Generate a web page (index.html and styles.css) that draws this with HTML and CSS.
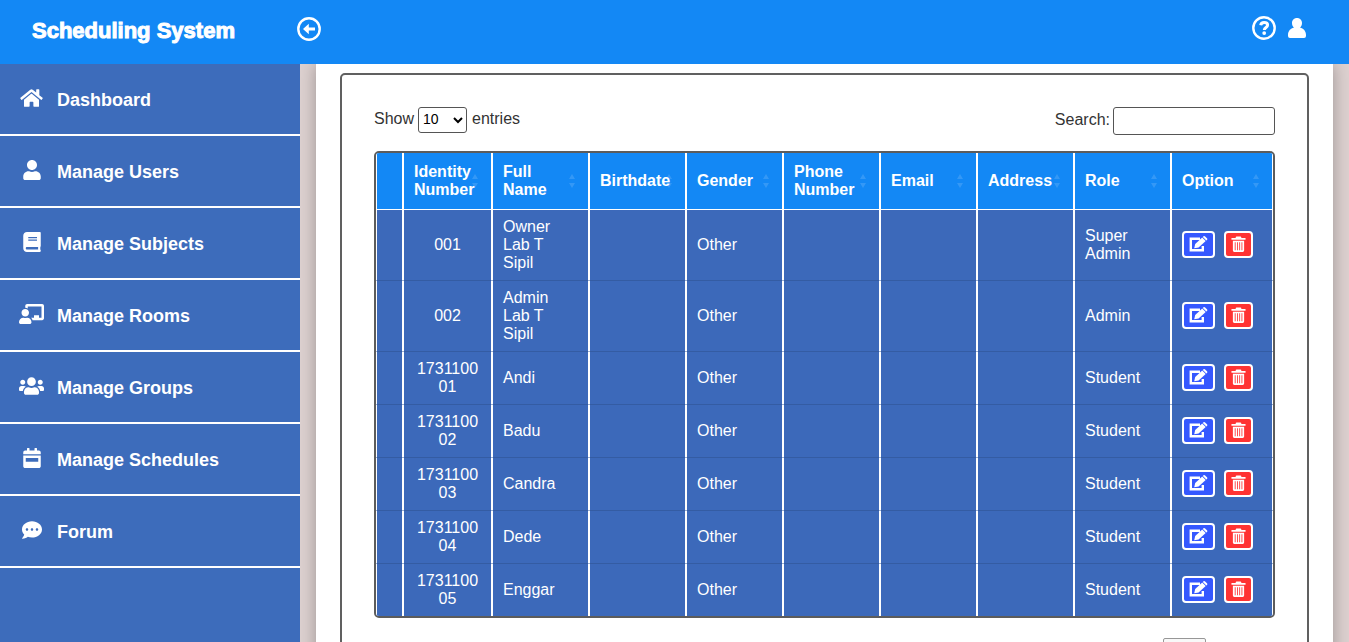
FILE: index.html
```html
<!DOCTYPE html>
<html lang="en">
<head>
<meta charset="utf-8">
<title>Scheduling System</title>
<link rel="stylesheet" href="styles.css">
</head>
<body>
<svg class="sprite" aria-hidden="true">
  <symbol id="edit" viewBox="0 0 19 16"><path d="M11 2.800H1.800v11.400h12V10" fill="none" stroke="currentColor" stroke-width="2.400"/><path d="M5.200 12.200l1-4.300 7-6.400 3.500 3.500-7.100 6.600z"/><path d="M13.800.9l.7-.6q.8-.6 1.600.1l1.900 1.900q.7.800 0 1.600l-.7.700z"/></symbol>
  <symbol id="trash" viewBox="0 0 16 18"><path fill-rule="evenodd" d="M5 1.500Q5 .5 6 .5h4q1 0 1 1V2h4.500v2H.5V2H5zM2 5h12v10.500q0 1.500-1.500 1.500h-9Q2 17 2 15.500zM4 6.500v8.500h.9V6.500zm2.400 0v8.500h.9V6.500zm2.400 0v8.500h.9V6.500zm2.400 0v8.500h.9V6.500z"/></symbol>
</svg>
<header class="topbar">
  <h1 class="brand">Scheduling System</h1>
  <button class="icon-button" type="button" aria-label="Collapse menu">
    <svg width="24" height="24" viewBox="0 0 24 24"><circle cx="12" cy="12" r="10.700" fill="none" stroke="currentColor" stroke-width="2.400"/><path d="M6 12l5.800-5.200v3.700H18v3h-6.200v3.700z"/></svg>
  </button>
  <div class="topbar-actions">
    <button class="icon-button" type="button" aria-label="Help">
      <svg width="24" height="24" viewBox="0 0 24 24"><circle cx="12" cy="12" r="10.700" fill="none" stroke="currentColor" stroke-width="2.400"/><path d="M8.700 9.200C9 7.200 10.300 6.400 12.100 6.400c2 0 3.500 1 3.500 2.700 0 2.500-3.300 2.300-3.300 5" fill="none" stroke="currentColor" stroke-width="3"/><circle cx="12.200" cy="17.100" r="1.900"/></svg>
    </button>
    <button class="icon-button" type="button" aria-label="Account">
      <svg width="18" height="20" viewBox="0 0 18 20"><path d="M9 0c3 0 5 2.200 5 5 0 2-.8 3.500-2 4.500 3.500.8 6 3.700 6 7.500v1q0 2-2 2H2q-2 0-2-2v-1c0-3.800 2.500-6.700 6-7.500C4.800 8.500 4 7 4 5c0-2.800 2-5 5-5z"/></svg>
    </button>
  </div>
</header>
<div class="layout">
  <nav class="sidebar">
    <a class="nav-link" href="#"><span class="nav-icon"><svg height="20" width="23" viewBox="0 0 576 512"><path d="M280.370 148.260L96 300.110V464a16 16 0 0 0 16 16l112.060-.29a16 16 0 0 0 15.920-16V368a16 16 0 0 1 16-16h64a16 16 0 0 1 16 16v95.640a16 16 0 0 0 16 16.050L464 480a16 16 0 0 0 16-16V300L295.670 148.260a12.190 12.190 0 0 0-15.300 0zM571.600 251.470L488 182.560V44.050a12 12 0 0 0-12-12h-56a12 12 0 0 0-12 12v72.610L318.470 43a48 48 0 0 0-61 0L4.340 251.470a12 12 0 0 0-1.600 16.900l25.500 31A12 12 0 0 0 45.150 301l235.220-193.740a12.190 12.190 0 0 1 15.300 0L530.900 301a12 12 0 0 0 16.900-1.600l25.500-31a12 12 0 0 0-1.700-16.930z"/></svg></span>Dashboard</a>
    <a class="nav-link" href="#"><span class="nav-icon"><svg height="20" width="18" viewBox="0 0 448 512"><path d="M224 256c70.700 0 128-57.300 128-128S294.700 0 224 0 96 57.300 96 128s57.300 128 128 128zm89.600 32h-16.700c-22.200 10.200-46.900 16-72.900 16s-50.600-5.800-72.900-16h-16.700C60.200 288 0 348.200 0 422.400V464c0 26.500 21.500 48 48 48h352c26.500 0 48-21.500 48-48v-41.600c0-74.200-60.200-134.400-134.400-134.400z"/></svg></span>Manage Users</a>
    <a class="nav-link" href="#"><span class="nav-icon"><svg height="20" width="18" viewBox="0 0 448 512"><path d="M448 360V24c0-13.300-10.700-24-24-24H96C43 0 0 43 0 96v320c0 53 43 96 96 96h328c13.300 0 24-10.700 24-24v-16c0-7.500-3.500-14.300-8.900-18.700-4.200-15.400-4.200-59.300 0-74.700 5.400-4.300 8.900-11.100 8.900-18.600zM128 134c0-3.300 2.700-6 6-6h212c3.300 0 6 2.700 6 6v20c0 3.300-2.700 6-6 6H134c-3.300 0-6-2.700-6-6v-20zm0 64c0-3.300 2.700-6 6-6h212c3.300 0 6 2.700 6 6v20c0 3.300-2.700 6-6 6H134c-3.300 0-6-2.700-6-6v-20zm253.400 250H96c-17.700 0-32-14.300-32-32 0-17.600 14.400-32 32-32h285.400c-1.900 17.100-1.900 46.900 0 64z"/></svg></span>Manage Subjects</a>
    <a class="nav-link" href="#"><span class="nav-icon"><svg height="20" width="25" viewBox="0 0 640 512"><path d="M208 352c-2.390 0-4.780.35-7.060 1.090C187.980 357.300 174.350 360 160 360c-14.350 0-27.980-2.700-40.950-6.910-2.280-.74-4.660-1.090-7.050-1.090C49.940 352-.33 402.480 0 464.620.14 490.880 21.730 512 48 512h224c26.270 0 47.860-21.120 48-47.380.33-62.140-49.940-112.620-112-112.620zm-48-32c53.020 0 96-42.980 96-96s-42.980-96-96-96-96 42.980-96 96 42.980 96 96 96zM592 0H208c-26.470 0-48 22.250-48 49.590V96c23.420 0 45.100 6.780 64 17.800V64h352v288h-64v-64H384v64h-76.240c19.100 16.690 33.120 38.730 39.690 64H592c26.470 0 48-22.250 48-49.590V49.590C640 22.250 618.470 0 592 0z"/></svg></span>Manage Rooms</a>
    <a class="nav-link" href="#"><span class="nav-icon"><svg height="20" width="25" viewBox="0 0 640 512"><path d="M96 224c35.300 0 64-28.700 64-64s-28.700-64-64-64-64 28.700-64 64 28.700 64 64 64zm448 0c35.300 0 64-28.700 64-64s-28.700-64-64-64-64 28.700-64 64 28.700 64 64 64zm32 32h-64c-17.600 0-33.500 7.100-45.100 18.600 40.300 22.100 68.900 62 75.100 109.400h66c17.700 0 32-14.300 32-32v-32c0-35.300-28.700-64-64-64zm-256 0c61.900 0 112-50.100 112-112S381.900 32 320 32 208 82.100 208 144s50.100 112 112 112zm76.800 32h-8.300c-20.800 10-43.900 16-68.500 16s-47.600-6-68.500-16h-8.300C179.600 288 128 339.600 128 403.200V432c0 26.500 21.500 48 48 48h288c26.500 0 48-21.500 48-48v-28.800c0-63.600-51.600-115.200-115.200-115.200zm-223.700-13.400C161.500 263.100 145.600 256 128 256H64c-35.300 0-64 28.700-64 64v32c0 17.700 14.300 32 32 32h65.900c6.300-47.400 34.900-87.300 75.200-109.400z"/></svg></span>Manage Groups</a>
    <a class="nav-link" href="#"><span class="nav-icon"><svg height="20" width="18" viewBox="0 0 448 512"><path fill-rule="evenodd" d="M0 160v-48c0-26.500 21.500-48 48-48h48V12c0-6.600 5.400-12 12-12h40c6.600 0 12 5.400 12 12v52h128V12c0-6.600 5.400-12 12-12h40c6.600 0 12 5.400 12 12v52h48c26.500 0 48 21.500 48 48v48zM0 192h448v272c0 26.500-21.500 48-48 48H48c-26.500 0-48-21.500-48-48zM64 256v96h320v-96z"/></svg></span>Manage Schedules</a>
    <a class="nav-link" href="#"><span class="nav-icon"><svg height="20" width="20" viewBox="0 0 512 512"><path d="M256 32C114.600 32 0 125.100 0 240c0 49.600 21.400 95 57 130.700C44.500 421.100 2.700 466 2.200 466.500c-2.200 2.300-2.800 5.700-1.500 8.700S4.800 480 8 480c66.300 0 116-31.800 140.600-51.400 32.700 12.300 69 19.400 107.400 19.400 141.400 0 256-93.100 256-208S397.400 32 256 32zM128 272c-17.700 0-32-14.300-32-32s14.300-32 32-32 32 14.300 32 32-14.300 32-32 32zm128 0c-17.700 0-32-14.300-32-32s14.300-32 32-32 32 14.300 32 32-14.300 32-32 32zm128 0c-17.700 0-32-14.300-32-32s14.300-32 32-32 32 14.300 32 32-14.300 32-32 32z"/></svg></span>Forum</a>
  </nav>
  <main class="content">
    <div class="page">
      <section class="panel">
        <div class="controls">
          <label class="length">Show
            <select class="length-select"><option>10</option><option>25</option><option>50</option></select>
            entries</label>
          <label class="search"><span class="search-label">Search:</span><input class="search-input" type="search"></label>
        </div>
        <div class="table-frame">
          <table class="users">
            <colgroup><col class="col-mark"><col class="col-id"><col><col><col><col><col><col><col><col class="col-option"></colgroup>
            <thead>
              <tr><th></th><th class="sort">Identity Number</th><th class="sort">Full Name</th><th class="sort">Birthdate</th><th class="sort">Gender</th><th class="sort">Phone Number</th><th class="sort">Email</th><th class="sort">Address</th><th class="sort">Role</th><th class="sort">Option</th></tr>
            </thead>
            <tbody>
              <tr><td></td><td class="id">001</td><td class="name">Owner Lab T Sipil</td><td></td><td>Other</td><td></td><td></td><td></td><td>Super Admin</td><td><div class="actions"><button class="action edit" type="button" aria-label="Edit"><svg width="19" height="16"><use href="#edit"/></svg></button><button class="action delete" type="button" aria-label="Delete"><svg width="15" height="17"><use href="#trash"/></svg></button></div></td></tr>
              <tr><td></td><td class="id">002</td><td class="name">Admin Lab T Sipil</td><td></td><td>Other</td><td></td><td></td><td></td><td>Admin</td><td><div class="actions"><button class="action edit" type="button" aria-label="Edit"><svg width="19" height="16"><use href="#edit"/></svg></button><button class="action delete" type="button" aria-label="Delete"><svg width="15" height="17"><use href="#trash"/></svg></button></div></td></tr>
              <tr><td></td><td class="id">173110001</td><td class="name">Andi</td><td></td><td>Other</td><td></td><td></td><td></td><td>Student</td><td><div class="actions"><button class="action edit" type="button" aria-label="Edit"><svg width="19" height="16"><use href="#edit"/></svg></button><button class="action delete" type="button" aria-label="Delete"><svg width="15" height="17"><use href="#trash"/></svg></button></div></td></tr>
              <tr><td></td><td class="id">173110002</td><td class="name">Badu</td><td></td><td>Other</td><td></td><td></td><td></td><td>Student</td><td><div class="actions"><button class="action edit" type="button" aria-label="Edit"><svg width="19" height="16"><use href="#edit"/></svg></button><button class="action delete" type="button" aria-label="Delete"><svg width="15" height="17"><use href="#trash"/></svg></button></div></td></tr>
              <tr><td></td><td class="id">173110003</td><td class="name">Candra</td><td></td><td>Other</td><td></td><td></td><td></td><td>Student</td><td><div class="actions"><button class="action edit" type="button" aria-label="Edit"><svg width="19" height="16"><use href="#edit"/></svg></button><button class="action delete" type="button" aria-label="Delete"><svg width="15" height="17"><use href="#trash"/></svg></button></div></td></tr>
              <tr><td></td><td class="id">173110004</td><td class="name">Dede</td><td></td><td>Other</td><td></td><td></td><td></td><td>Student</td><td><div class="actions"><button class="action edit" type="button" aria-label="Edit"><svg width="19" height="16"><use href="#edit"/></svg></button><button class="action delete" type="button" aria-label="Delete"><svg width="15" height="17"><use href="#trash"/></svg></button></div></td></tr>
              <tr><td></td><td class="id">173110005</td><td class="name">Enggar</td><td></td><td>Other</td><td></td><td></td><td></td><td>Student</td><td><div class="actions"><button class="action edit" type="button" aria-label="Edit"><svg width="19" height="16"><use href="#edit"/></svg></button><button class="action delete" type="button" aria-label="Delete"><svg width="15" height="17"><use href="#trash"/></svg></button></div></td></tr>
            </tbody>
          </table>
        </div>
        <div class="pager"><button class="page-button" type="button" aria-label="Page 1"></button></div>
      </section>
    </div>
  </main>
</div>
</body>
</html>
```
FILE: styles.css
```css
* { box-sizing: border-box; }
body {
  margin: 0;
  height: 100vh;
  display: flex;
  flex-direction: column;
  overflow: hidden;
  font: 16px/18px "Liberation Sans", Arial, sans-serif;
  color: #333;
}
.sprite { display: none; }
svg { display: block; fill: currentColor; flex: none; }
button { font: inherit; color: inherit; cursor: pointer; }

.topbar {
  flex: none;
  display: flex;
  align-items: center;
  height: 64px;
  padding: 0 43px 6px 32px;
  background: #1388f5;
  color: #fff;
}
.brand {
  width: 265px;
  margin: 0;
  padding-top: 4px;
  font: 900 22px/24px "Liberation Sans", Arial, sans-serif;
  -webkit-text-stroke: 1px #fff;
}
.icon-button { padding: 0; border: 0; background: none; }
.topbar-actions { display: flex; align-items: center; gap: 12px; margin-left: auto; padding-bottom: 2px; }

.layout { flex: 1; min-height: 0; display: flex; }
.sidebar { flex: none; width: 300px; background: #3d6cbb; }
.nav-link {
  display: flex;
  align-items: center;
  gap: 12px;
  height: 72px;
  padding: 2px 0 0 18px;
  border-bottom: 2px solid #fff;
  color: #fff;
  font-size: 18px;
  font-weight: bold;
  text-decoration: none;
}
.nav-icon { display: flex; justify-content: center; width: 27px; padding-bottom: 4px; }

.content { flex: 1; min-width: 0; padding: 0 16px; background: #ddd1d0; overflow: hidden; }
.page { padding: 9px 24px 24px; background: #fff; box-shadow: 0 0 16px rgba(0, 0, 0, .3); }
.panel { padding: 32px; border: 2px solid #606060; border-radius: 5px; }
.controls { display: flex; justify-content: space-between; align-items: flex-start; margin-bottom: 16px; }
.length, .search { display: flex; align-items: center; gap: 4px; }
.length { height: 24px; }
.length-select {
  width: 49px;
  height: 26px;
  margin: 2px 1px 0 0;
  padding: 0 2px 2px 0;
  border: 1px solid #555;
  border-radius: 3px;
  background: #fff;
  font: 14px "Liberation Sans", Arial, sans-serif;
}
.search { gap: 3px; }
.search-label { padding-bottom: 2px; }
.search-input { width: 162px; height: 28px; border: 1px solid #555; border-radius: 3px; background: #fff; }

.table-frame { border: 2px solid #5c5c5c; border-radius: 5px; overflow: hidden; }
.users { width: 100%; table-layout: fixed; border-collapse: separate; border-spacing: 0; color: #fff; }
.col-mark { width: 27px; }
.col-id { width: 89px; }
.col-option { width: 102px; }
.users th {
  position: relative;
  padding: 10px;
  border: solid #fff;
  border-width: 0 1px 1px;
  background: #1388f5;
  text-align: left;
}
.users td {
  padding: 8px 10px;
  border: solid #fff;
  border-width: 0 1px;
  background: #3c69ba;
  overflow-wrap: anywhere;
}
.users tr + tr td { border-top: 1px solid #345ca3; }
.users .id { text-align: center; }
.users .name { padding-right: 18px; }
.sort::before, .sort::after {
  content: "";
  position: absolute;
  right: 13px;
  border: solid transparent;
  border-width: 0 3px;
}
.sort::before { bottom: 30px; border-bottom: 5px solid rgba(255, 255, 255, .14); }
.sort::after { top: 30px; border-top: 5px solid rgba(255, 255, 255, .14); }

.actions { display: flex; gap: 9px; padding-bottom: 2px; }
.action {
  display: flex;
  align-items: center;
  justify-content: center;
  height: 27px;
  padding: 0;
  border: 2px solid #fff;
  border-radius: 4px;
}
.edit { width: 33px; background: #3558ff; }
.delete { width: 29px; background: #ff3333; }

.pager { display: flex; justify-content: flex-end; padding: 20px 69px 0 0; }
.page-button { width: 43px; height: 32px; border: 1px solid #979797; border-radius: 2px; background: #f8f8f8; }
```
